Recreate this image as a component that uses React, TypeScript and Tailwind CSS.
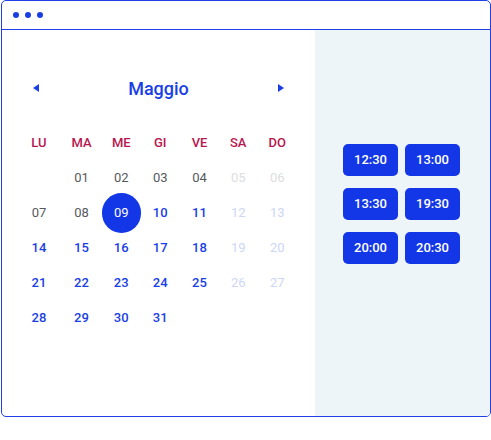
import React from 'react';

type Day = { label: string; tone: 'past' | 'pastOff' | 'open' | 'off' | 'selected' | 'empty' };

const weekdays = ['LU', 'MA', 'ME', 'GI', 'VE', 'SA', 'DO'];

const days: Day[] = [
  { label: '', tone: 'empty' },
  { label: '01', tone: 'past' },
  { label: '02', tone: 'past' },
  { label: '03', tone: 'past' },
  { label: '04', tone: 'past' },
  { label: '05', tone: 'pastOff' },
  { label: '06', tone: 'pastOff' },
  { label: '07', tone: 'past' },
  { label: '08', tone: 'past' },
  { label: '09', tone: 'selected' },
  { label: '10', tone: 'open' },
  { label: '11', tone: 'open' },
  { label: '12', tone: 'off' },
  { label: '13', tone: 'off' },
  { label: '14', tone: 'open' },
  { label: '15', tone: 'open' },
  { label: '16', tone: 'open' },
  { label: '17', tone: 'open' },
  { label: '18', tone: 'open' },
  { label: '19', tone: 'off' },
  { label: '20', tone: 'off' },
  { label: '21', tone: 'open' },
  { label: '22', tone: 'open' },
  { label: '23', tone: 'open' },
  { label: '24', tone: 'open' },
  { label: '25', tone: 'open' },
  { label: '26', tone: 'off' },
  { label: '27', tone: 'off' },
  { label: '28', tone: 'open' },
  { label: '29', tone: 'open' },
  { label: '30', tone: 'open' },
  { label: '31', tone: 'open' },
];

const toneClass: Record<Day['tone'], string> = {
  past: 'font-normal text-[#55595e]',
  pastOff: 'font-normal text-[#dcdde0]',
  open: 'font-medium text-[#1a3ee6]',
  off: 'font-normal text-[#cdd6f7]',
  selected: 'font-normal text-white',
  empty: '',
};

const slots = ['12:30', '13:00', '13:30', '19:30', '20:00', '20:30'];

export default function App() {
  return (
    <div className="ml-px h-[417px] w-[490px] overflow-hidden rounded-[5px] border border-[#1e40e6] bg-white font-['Roboto',sans-serif]">
      <div className="flex h-[29px] items-center gap-[6px] border-b border-[#1e40e6] pl-[11px]">
        <span className="h-[6px] w-[6px] rounded-full bg-[#1a3ee6]" />
        <span className="h-[6px] w-[6px] rounded-full bg-[#1a3ee6]" />
        <span className="h-[6px] w-[6px] rounded-full bg-[#1a3ee6]" />
      </div>

      <div className="flex h-[386px]">
        <div className="w-[313px] pl-[15px] pt-[46px]">
          <div className="ml-[4px] flex h-6 w-[275px] items-center justify-between px-[12px]">
            <svg width="6" height="8" viewBox="0 0 6 8">
              <path d="M6 0 L0 4 L6 8 Z" fill="#1a3ee6" />
            </svg>
            <span className="text-[18px] font-medium text-[#1a3ee6]">Maggio</span>
            <svg width="6" height="8" viewBox="0 0 6 8">
              <path d="M0 0 L6 4 L0 8 Z" fill="#1a3ee6" />
            </svg>
          </div>

          <div className="mt-[25px] grid w-[280px] grid-cols-[44px_41px_38.5px_39.5px_39px_38.5px_39.5px]">
            {weekdays.map(w => (
              <div key={w} className="flex h-[35px] items-center justify-center text-[13px] font-medium text-[#b8174f]">
                {w}
              </div>
            ))}
            {days.map((d, i) => (
              <div key={i} className="flex h-[35px] items-center justify-center">
                {d.tone === 'selected' ? (
                  <span className="flex h-10 w-10 items-center justify-center rounded-full bg-[#1337e6] text-[13px] font-normal text-white">
                    {d.label}
                  </span>
                ) : (
                  <span className={`text-[13px] ${toneClass[d.tone]}`}>{d.label}</span>
                )}
              </div>
            ))}
          </div>
        </div>

        <div className="flex-1 bg-[#edf5f9] pl-[28px] pt-[114px]">
          <div className="grid w-[117px] grid-cols-2 gap-x-[7px] gap-y-[12px]">
            {slots.map(s => (
              <div
                key={s}
                className="flex h-[32px] w-[55px] items-center justify-center rounded-[5px] bg-[#1337e6] text-[13px] font-medium text-white"
              >
                {s}
              </div>
            ))}
          </div>
        </div>
      </div>
    </div>
  );
}
